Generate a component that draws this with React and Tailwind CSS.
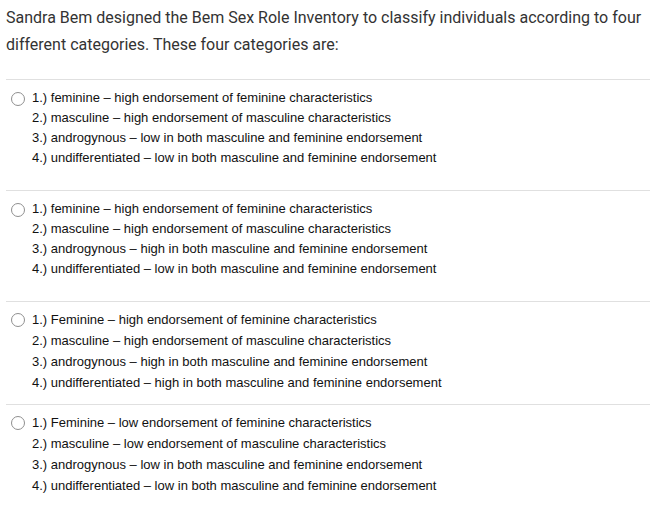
import React from 'react';

const OPTIONS = [
  {
    lines: [
      '1.) feminine – high endorsement of feminine characteristics',
      '2.) masculine – high endorsement of masculine characteristics',
      '3.) androgynous – low in both masculine and feminine endorsement',
      '4.) undifferentiated – low in both masculine and feminine endorsement',
    ],
    box: 'pt-[8px] pb-[22px]',
    lh: 'leading-[20px]',
  },
  {
    lines: [
      '1.) feminine – high endorsement of feminine characteristics',
      '2.) masculine – high endorsement of masculine characteristics',
      '3.) androgynous – high in both masculine and feminine endorsement',
      '4.) undifferentiated – low in both masculine and feminine endorsement',
    ],
    box: 'pt-[8px] pb-[22px]',
    lh: 'leading-[20px]',
  },
  {
    lines: [
      '1.) Feminine – high endorsement of feminine characteristics',
      '2.) masculine – high endorsement of masculine characteristics',
      '3.) androgynous – high in both masculine and feminine endorsement',
      '4.) undifferentiated – high in both masculine and feminine endorsement',
    ],
    box: 'pt-[7px] pb-[11px]',
    lh: 'leading-[21px]',
  },
  {
    lines: [
      '1.) Feminine – low endorsement of feminine characteristics',
      '2.) masculine – low endorsement of masculine characteristics',
      '3.) androgynous – low in both masculine and feminine endorsement',
      '4.) undifferentiated – low in both masculine and feminine endorsement',
    ],
    box: 'pt-[7px] pb-[11px]',
    lh: 'leading-[21px]',
  },
];

function Radio() {
  return (
    <span className="mt-[4px] w-[14px] h-[14px] shrink-0 rounded-full border border-[#8f8f8f] bg-white" />
  );
}

export default function App() {
  return (
    <div className="w-[656px] h-[508px] bg-white px-[6px] overflow-hidden">
      {/* Question stem */}
      <p className="pt-[4px] pb-[21px] text-[16px] leading-[27px] text-[#333] font-['Roboto',sans-serif]">
        Sandra Bem designed the Bem Sex Role Inventory to classify individuals according to four different categories. These four categories are:
      </p>

      {/* Answer choices */}
      {OPTIONS.map((opt, i) => (
        <div key={i} className={`border-t border-[#e0e0e0] ${opt.box}`}>
          <label className="flex items-start gap-[7px] pl-[5px]">
            <Radio />
            <div className={`text-[13px] ${opt.lh} text-[#111] font-['Liberation_Sans',Arial,sans-serif]`}>
              {opt.lines.map((l, j) => (
                <div key={j}>{l}</div>
              ))}
            </div>
          </label>
        </div>
      ))}
    </div>
  );
}
